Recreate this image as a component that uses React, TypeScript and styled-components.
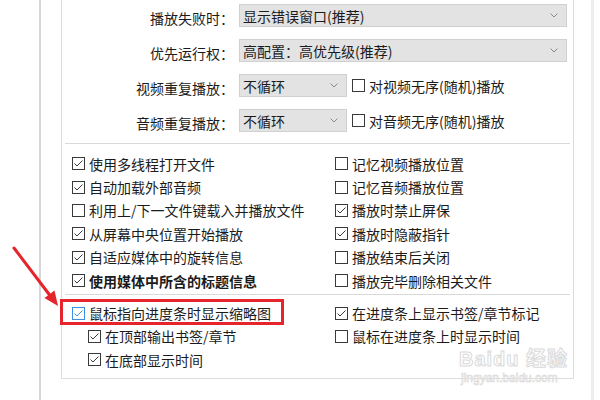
import React from "react";
import styled, { createGlobalStyle } from "styled-components";

const Global = createGlobalStyle`
  html, body { margin: 0; padding: 0; background: #ffffff; }
  body { font-family: "Noto Sans CJK SC", "Noto Sans", sans-serif; color: #1b1b1b; }
`;

const Page = styled.div`
  position: relative;
  width: 600px;
  height: 400px;
  overflow: hidden;
  display: flex;
  padding-left: 39px;
  box-sizing: border-box;
  background: #fff;
`;

const Frame = styled.div`
  width: 555px;
  height: 400px;
  box-sizing: border-box;
  border-left: 2px solid #d6d6d6;
  border-right: 3px solid #eeeeee;
  padding: 0 17px 0 20px;
`;

const GroupBox = styled.div`
  height: 379px;
  box-sizing: border-box;
  border: 1px solid #dcdcdc;
  border-top: none;
  display: flex;
  flex-direction: column;
`;

const TopSection = styled.div`
  display: grid;
  grid-template-columns: 172px 1fr;
  grid-auto-rows: 23px;
  column-gap: 5px;
  row-gap: 12px;
  padding: 4px 6px 0 0;
`;

const Label = styled.div`
  text-align: right;
  font-size: 14px;
  line-height: 20px;
  padding-top: 4px;
  white-space: nowrap;
`;

const Select = styled.div<{ $width?: number }>`
  height: 23px;
  box-sizing: border-box;
  width: ${(p) => (p.$width ? `${p.$width}px` : "100%")};
  flex: none;
  background: #e3e3e3;
  border: 1px solid #d0d0d0;
  display: flex;
  align-items: center;
  justify-content: space-between;
  padding: 0 8px 0 3px;
  font-size: 14px;
  line-height: 20px;
  white-space: nowrap;
`;

const Chevron = styled.svg`
  width: 8px;
  height: 5px;
  flex: none;
`;

const InlineRow = styled.div`
  display: flex;
  align-items: center;
  gap: 5px;
  height: 23px;
`;

const Divider = styled.div<{ $mt: number }>`
  height: 1px;
  flex: none;
  background: #d9d9d9;
  margin: ${(p) => p.$mt}px 3px 0;
`;

const CheckGrid = styled.div<{ $pt: number }>`
  display: grid;
  grid-template-columns: 263px 1fr;
  grid-auto-rows: 23.4px;
  padding: ${(p) => p.$pt}px 0 0 10px;
`;

const Item = styled.div<{ $bold?: boolean; $indent?: boolean }>`
  display: flex;
  align-items: center;
  gap: 4px;
  font-size: 14px;
  line-height: 20px;
  font-weight: ${(p) => (p.$bold ? 700 : 400)};
  white-space: nowrap;
  padding-left: ${(p) => (p.$indent ? "16px" : "0")};
`;

const Highlight = styled.div`
  position: relative;
  justify-self: start;
  display: flex;
  align-items: center;
  &::after {
    content: "";
    position: absolute;
    left: -12px;
    right: -13px;
    top: -4px;
    bottom: -2px;
    border: 3px solid #e5242b;
    pointer-events: none;
  }
`;

const Box = styled.span<{ $accent?: boolean }>`
  width: 13px;
  height: 13px;
  box-sizing: border-box;
  flex: none;
  border: 1px solid ${(p) => (p.$accent ? "#3d8fe3" : "#3a3a3a")};
  background: #fff;
  display: flex;
  align-items: center;
  justify-content: center;
`;

const Arrow = styled.svg`
  position: absolute;
  left: 0;
  top: 0;
  width: 80px;
  height: 320px;
  pointer-events: none;
`;

const Watermark = styled.div`
  position: absolute;
  left: 459px;
  top: 349px;
  display: flex;
  flex-direction: column;
  align-items: flex-start;
  gap: 3px;
  color: #ffffff;
  -webkit-text-stroke: 1px #dadada;
  pointer-events: none;
  font-family: "Liberation Sans", "Noto Sans CJK SC", sans-serif;
`;

const WmTop = styled.div`
  font-size: 20px;
  font-weight: 700;
  line-height: 20px;
  letter-spacing: 1px;
`;

const WmBottom = styled.div`
  font-size: 12px;
  line-height: 12px;
  margin-left: 2px;
  -webkit-text-stroke: 0.6px #d6d6d6;
`;

function Check({ checked, accent }: { checked?: boolean; accent?: boolean }) {
  return (
    <Box $accent={accent}>
      {checked && (
        <svg width="11" height="11" viewBox="0 0 11 11">
          <polyline
            points="1.5,5.5 4,8 9.5,2.5"
            fill="none"
            stroke={accent ? "#3d8fe3" : "#3a3a3a"}
            strokeWidth="1"
          />
        </svg>
      )}
    </Box>
  );
}

function Dropdown({ text, width }: { text: string; width?: number }) {
  return (
    <Select $width={width}>
      <span>{text}</span>
      <Chevron viewBox="0 0 8 5">
        <polyline points="0.5,0.5 4,4 7.5,0.5" fill="none" stroke="#8a8a8a" strokeWidth="1" />
      </Chevron>
    </Select>
  );
}

const gridItems: { text: string; checked: boolean; bold?: boolean }[] = [
  { text: "使用多线程打开文件", checked: true },
  { text: "记忆视频播放位置", checked: false },
  { text: "自动加载外部音频", checked: true },
  { text: "记忆音频播放位置", checked: false },
  { text: "利用上/下一文件键载入并播放文件", checked: false },
  { text: "播放时禁止屏保", checked: true },
  { text: "从屏幕中央位置开始播放", checked: true },
  { text: "播放时隐蔽指针", checked: true },
  { text: "自适应媒体中的旋转信息", checked: true },
  { text: "播放结束后关闭", checked: false },
  { text: "使用媒体中所含的标题信息", checked: true, bold: true },
  { text: "播放完毕删除相关文件", checked: false },
];

export default function App() {
  return (
    <>
      <Global />
      <Page>
        <Frame>
          <GroupBox>
            <TopSection>
              <Label>播放失败时：</Label>
              <Dropdown text="显示错误窗口(推荐)" />
              <Label>优先运行权：</Label>
              <Dropdown text="高配置：高优先级(推荐)" />
              <Label>视频重复播放：</Label>
              <InlineRow>
                <Dropdown text="不循环" width={108} />
                <Item>
                  <Check />
                  对视频无序(随机)播放
                </Item>
              </InlineRow>
              <Label>音频重复播放：</Label>
              <InlineRow>
                <Dropdown text="不循环" width={108} />
                <Item>
                  <Check />
                  对音频无序(随机)播放
                </Item>
              </InlineRow>
            </TopSection>
            <Divider $mt={11} />
            <CheckGrid $pt={8}>
              {gridItems.map((it) => (
                <Item key={it.text} $bold={it.bold}>
                  <Check checked={it.checked} />
                  {it.text}
                </Item>
              ))}
            </CheckGrid>
            <Divider $mt={2} />
            <CheckGrid $pt={6}>
              <Item>
                <Highlight>
                  <Item>
                    <Check checked accent />
                    鼠标指向进度条时显示缩略图
                  </Item>
                </Highlight>
              </Item>
              <Item>
                <Check checked />
                在进度条上显示书签/章节标记
              </Item>
              <Item $indent>
                <Check checked />
                在顶部输出书签/章节
              </Item>
              <Item>
                <Check />
                鼠标在进度条上时显示时间
              </Item>
              <Item $indent>
                <Check checked />
                在底部显示时间
              </Item>
            </CheckGrid>
          </GroupBox>
        </Frame>
        <Arrow viewBox="0 0 80 320">
          <line x1="14" y1="248" x2="50" y2="295.5" stroke="#e5242b" strokeWidth="3" strokeLinecap="round" />
          <polygon points="58,306 54.5,290.5 44.5,298" fill="#e5242b" />
        </Arrow>
        <Watermark>
          <WmTop>Baidu 经验</WmTop>
          <WmBottom>jingyan.baidu.com</WmBottom>
        </Watermark>
      </Page>
    </>
  );
}
